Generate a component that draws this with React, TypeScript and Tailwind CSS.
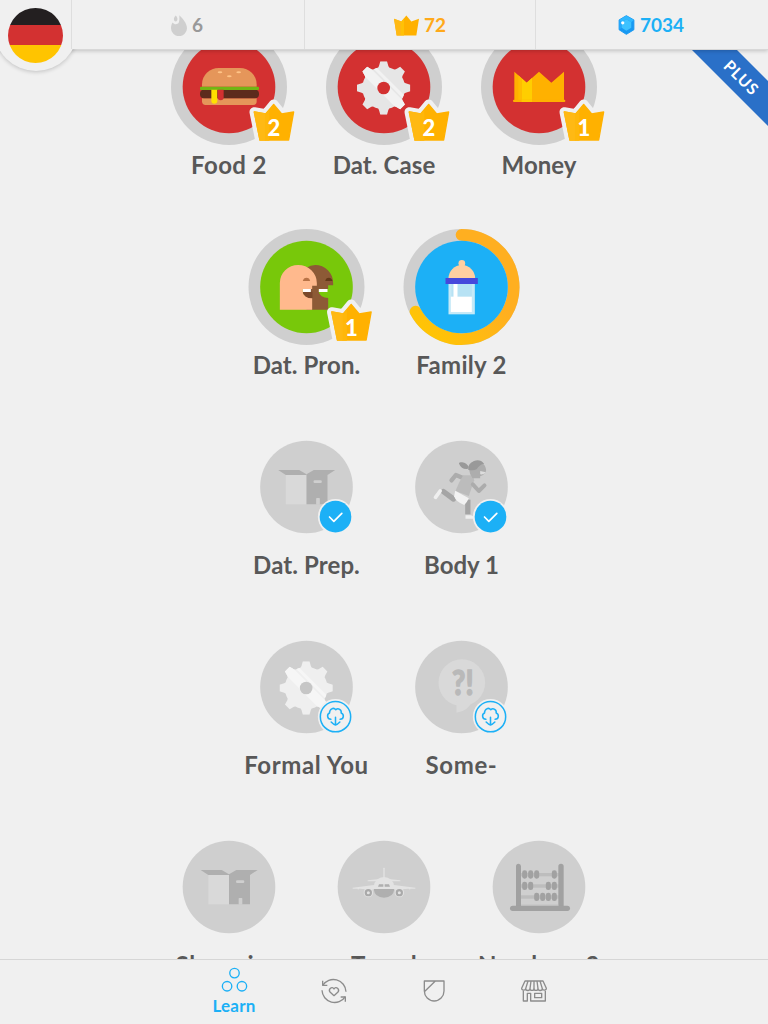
import type { ReactNode } from 'react';

type Badge = { kind: 'crown'; level: number } | { kind: 'check' } | { kind: 'download' };

interface Skill {
  name: string;
  color: string;
  icon: ReactNode;
  ring?: boolean;
  progress?: boolean;
  badge?: Badge;
  labelClass?: string;
}

// Skill artwork is drawn around (0, 0); three units make one pixel.

const GEAR_TEETH = [0, 45, 90, 135, 180, 225, 270, 315];

function Gear({ id, fill, shine, hole }: { id: string; fill: string; shine: string; hole: string }) {
  return (
    <g transform="translate(-1 3)">
      <clipPath id={id}>
        <circle r="64" />
        {GEAR_TEETH.map((a) => (
          <path key={a} d="M-20 -56 L-14 -66 L-10 -80 H10 L14 -66 L20 -56 Z" transform={`rotate(${a})`} />
        ))}
      </clipPath>
      <g clipPath={`url(#${id})`}>
        <rect x="-90" y="-90" width="180" height="180" fill={fill} />
        <path d="M-72 -50 L-46 -66 L80 60 L46 68 Z" fill={shine} />
        <path d="M-36 -64 L-24 -64 L74 34 L68 42 Z" fill={shine} />
      </g>
      <circle r="19" fill={hole} />
    </g>
  );
}

function Burger() {
  return (
    <g>
      <path d="M-81 -1 V-8 A50 49 0 0 1 -31 -57 H33 A50 49 0 0 1 83 -8 V-1 Z" fill="#e5965a" />
      <ellipse cx="-27" cy="-44" rx="7" ry="3" fill="#ffc487" />
      <ellipse cx="29" cy="-44" rx="7" ry="3" fill="#ffc487" />
      <ellipse cx="1" cy="-32" rx="7" ry="3" fill="#ffc487" />
      <path d="M-81 34 H83 V43 A11 11 0 0 1 72 54 H-70 A11 11 0 0 1 -81 43 Z" fill="#e5965a" />
      <rect x="-87" y="8" width="177" height="26" rx="12" fill="#5d2b1d" />
      <rect x="-87" y="-1" width="177" height="10" rx="3" fill="#72b514" />
      <path d="M-53 8 H-35 V41 A9 9 0 0 1 -53 41 Z" fill="#ffe000" />
      <path d="M-34 8 H-16 V31 A9 9 0 0 1 -34 31 Z" fill="#d33131" />
    </g>
  );
}

function MoneyCrown() {
  return (
    <g>
      <path d="M-74 -46 L-37 -13 L0 -46 L37 -13 L75 -46 V44 H-74 Z" fill="#ffb100" />
      <path d="M-52 -26 L-37 -13 L-21 -27 V44 H-52 Z" fill="#ffce00" />
      <path d="M-62 -35 L-52 -26 V44 H-62 Z" fill="#ffbc00" />
      <rect x="-78" y="38" width="157" height="7" rx="3" fill="#ffb100" />
      <rect x="-52" y="38" width="31" height="7" fill="#ffc800" />
    </g>
  );
}

function Faces() {
  return (
    <g>
      <path d="M0 -58 Q12 -66 26 -66 A54 54 0 0 1 80 -12 V-5 H65 V6 H37 V15 A28 19 0 0 0 65 33 V68 H0 Z" fill="#8d5a36" />
      <path d="M-80 68 V-12 A55 54 0 0 1 -25 -66 A56 54 0 0 1 31 -12 V-4 H17 V6 H-11 V15 A28 19 0 0 0 17 33 V68 Z" fill="#ffb98d" />
      <path d="M-11 14 H18 V34 A28 19 0 0 1 -11 14 Z" fill="#7b482a" />
      <rect x="-11" y="6" width="24" height="9" fill="#fff" />
      <rect x="37" y="6" width="26" height="9" fill="#fff" />
      <path d="M-11 -18 Q-9 -28 0 -28 Q9 -28 11 -18 Z" fill="#b97346" />
      <path d="M56 -18 Q58 -28 67 -28 Q76 -27 78 -18 Z" fill="#633818" />
    </g>
  );
}

function Bottle() {
  return (
    <g>
      <circle cx="1" cy="-71" r="10" fill="#ffcfa1" />
      <path d="M-7 -72 H9 V-60 H-7 Z" fill="#ffcfa1" />
      <path d="M-39 -26 A40 40 0 0 1 41 -26 Z" fill="#ffcfa1" />
      <rect x="-39" y="-10" width="79" height="92" fill="#c5e9f7" />
      <rect x="-30" y="-10" width="61" height="84" fill="#b7e2f4" />
      <rect x="-24" y="-10" width="12" height="44" fill="#fff" />
      <rect x="-32" y="29" width="63" height="46" fill="#fff" />
      <rect x="-48" y="-27" width="97" height="18" fill="#4648dc" />
    </g>
  );
}

function Box() {
  return (
    <g>
      <rect x="-62" y="-38" width="62" height="90" fill="#d9d9d9" />
      <path d="M-85 -51 H-22 L0 -38 V-36 H-62 Z" fill="#afafaf" />
      <path d="M0 -38 L22 -51 H86 L63 -36 V52 H0 Z" fill="#afafaf" />
      <rect x="21" y="-20" width="25" height="8" rx="4" fill="#cfcfcf" />
      <rect x="29" y="33" width="11" height="20" rx="2" fill="#cfcfcf" />
    </g>
  );
}

function Runner() {
  return (
    <g fill="none" strokeLinecap="round" strokeLinejoin="round">
      <path d="M-54 14 L-24 36" stroke="#a5a5a5" strokeWidth="16" />
      <path d="M-64 12 L-78 31" stroke="#efefef" strokeWidth="11" />
      <path d="M19 38 V82" stroke="#a5a5a5" strokeWidth="16" strokeLinecap="butt" />
      <path d="M12 85 H28 Q38 88 38 95 H12 Z" fill="#efefef" />
      <path d="M-30 -20 L-17 -36 L12 -24" stroke="#acacac" strokeWidth="13" />
      <path d="M5 -35 H34 L38 -20 L22 27 L-18 12 Q-8 -14 5 -35 Z" fill="#bcbcbc" />
      <path d="M34 -8 L52 12 L69 -5" stroke="#acacac" strokeWidth="12" />
      <path d="M-19 11 L22 34 Q16 48 8 54 Q-18 44 -22 28 Z" fill="#f2f2f2" />
      <path d="M22 -56 Q24 -38 33 -26 H56 V-32 Q72 -38 74 -50 Q72 -66 62 -72 Z" fill="#adadad" />
      <path d="M20 -52 A27 27 0 0 1 68 -70 Q54 -68 46 -54 Q36 -48 20 -52 Z" fill="#999" />
      <path d="M22 -60 Q16 -72 2 -74 Q-10 -76 -7 -69 Q0 -52 18 -54 Z" fill="#999" />
      <path d="M56 -48 L73 -44 Q68 -36 56 -38 Z" fill="#ddd" />
    </g>
  );
}

function Bubble() {
  return (
    <g>
      <circle cx="1" cy="-13" r="70" fill="#d9d9d9" />
      <path d="M-15 44 V77 Q20 72 30 44 Z" fill="#d9d9d9" />
      <text
        transform="translate(4 23) scale(0.86 1)"
        textAnchor="middle"
        fill="#b9b9b9"
        stroke="#b9b9b9"
        strokeWidth="4"
        className="text-[100px] font-black"
      >
        ?!
      </text>
    </g>
  );
}

function Plane() {
  return (
    <g>
      <rect x="-2" y="-58" width="4" height="32" rx="2" fill="#e3e3e3" />
      <path d="M-49 -20 L-20 -23 H20 L49 -20 V-17 H-49 Z" fill="#e3e3e3" />
      <path d="M-30 8 V-3 A30 27 0 0 1 30 -3 V8 Z" fill="#e3e3e3" />
      <path d="M-94 2 L-30 -6 H30 L94 2 V5 H79 L78 8 L74 5 L30 8 H-30 L-74 5 L-78 8 L-79 5 H-94 Z" fill="#e3e3e3" />
      <path d="M-31 6 H31 Q28 32 0 32 Q-28 32 -31 6 Z" fill="#afafaf" />
      <path d="M-18 -1 L-15 -8 H-2 V-1 Z M18 -1 L15 -8 H2 V-1 Z" fill="#afafaf" />
      {[-47, 46].map((x) => (
        <g key={x}>
          <circle cx={x} cy="17" r="14" fill="#e3e3e3" />
          <circle cx={x} cy="17" r="11" fill="#a9a9a9" />
          <circle cx={x} cy="17" r="4.5" fill="#e3e3e3" />
        </g>
      ))}
    </g>
  );
}

const BEADS = [
  { y: -37, xs: [-43, -25, -7, 46] },
  { y: -3, xs: [-43, -25, 28, 46] },
  { y: 30, xs: [-7, 11, 28, 46] },
];

function Abacus() {
  return (
    <g fill="#a1a1a1">
      {BEADS.map((row) => (
        <g key={row.y}>
          <rect x="-60" y={row.y - 5} width="120" height="10" fill="#bdbdbd" />
          {row.xs.map((x) => (
            <rect key={x} x={x - 7.5} y={row.y - 13} width="15" height="25" rx="7" />
          ))}
        </g>
      ))}
      <path d="M-69 60 V-62 A7.5 7.5 0 0 1 -54 -62 V60 Z M58 60 V-62 A8 8 0 0 1 74 -62 V60 Z" />
      <rect x="-87" y="56" width="180" height="16" rx="8" />
      <rect x="-54" y="53" width="112" height="3" fill="#bdbdbd" />
    </g>
  );
}

function SkillBadge({ badge }: { badge: Badge }) {
  if (badge.kind === 'crown') {
    const shape = 'M76 75 L110 81 L134 52 L158 81 L194 75 L179 159 H93 Z';
    return (
      <g strokeLinejoin="round">
        <path d={shape} fill="#f0f0f0" stroke="#f0f0f0" strokeWidth="29" />
        <path d={shape} fill="#ffb100" stroke="#ffb100" strokeWidth="4" />
        <path d="M76 75 L108 81 V159 H93 Z" fill="#ffb914" stroke="#ffb914" strokeWidth="4" />
        <path d="M108 82 L121 68 V161 H108 Z" fill="#ffb70a" />
        <text x="135" y="146" textAnchor="middle" fill="#fff" className="text-[66px] font-black">
          {badge.level}
        </text>
      </g>
    );
  }

  return (
    <g transform="translate(87 89)" fill="none" strokeLinecap="round" strokeLinejoin="round">
      <circle r="53" fill="#f0f0f0" />
      {badge.kind === 'check' ? (
        <>
          <circle r="47.5" fill="#1cb0f6" />
          <path d="M-18 1 L-5 14 L19 -10" stroke="#fff" strokeWidth="5" />
        </>
      ) : (
        <g stroke="#1cb0f6" strokeWidth="4.6">
          <circle r="45.5" />
          <path d="M-14 8 C-25 7 -27 -7 -18 -11 C-18 -23 -6 -29 1 -21 C8 -27 19 -21 17 -11 C27 -7 25 7 14 8" />
          <path d="M0 2 V24 M-13 16 Q-5 24 0 25 Q5 24 13 16" />
        </g>
      )}
    </g>
  );
}

function SkillNode({ skill }: { skill: Skill }) {
  return (
    <div className="flex w-[155px] flex-col items-center">
      <svg viewBox="-174 -174 348 348" className="size-[116px] shrink-0 overflow-visible">
        {skill.ring && <circle r="174" fill="#cfcfcf" />}
        {skill.progress && (
          <>
            <linearGradient id="progress" x1="1" y1="0" x2="0" y2="1">
              <stop offset="0.4" stopColor="#ffaf20" />
              <stop offset="1" stopColor="#ffc800" />
            </linearGradient>
            <path
              d="M0 -156.5 A156.5 156.5 0 1 1 -138 73.8"
              fill="none"
              stroke="url(#progress)"
              strokeWidth="35"
              strokeLinecap="round"
            />
          </>
        )}
        <circle r="139" fill={skill.color} />
        {skill.icon}
        {skill.badge && <SkillBadge badge={skill.badge} />}
      </svg>
      <span
        className={`mt-1 whitespace-nowrap text-2xl leading-8 font-bold text-[#585858] ${skill.labelClass ?? ''}`}
      >
        {skill.name}
      </span>
    </div>
  );
}

const ROWS: Skill[][] = [
  [
    {
      name: 'Food 2',
      color: '#d33131',
      ring: true,
      icon: <Burger />,
      badge: { kind: 'crown', level: 2 },
      labelClass: 'tracking-[0.4px]',
    },
    {
      name: 'Dat. Case',
      color: '#d33131',
      ring: true,
      icon: <Gear id="gear-case" fill="#e6e6e6" shine="#f2f2f2" hole="#d33131" />,
      badge: { kind: 'crown', level: 2 },
      labelClass: 'tracking-[0.1px]',
    },
    { name: 'Money', color: '#d33131', ring: true, icon: <MoneyCrown />, badge: { kind: 'crown', level: 1 } },
  ],
  [
    {
      name: 'Dat. Pron.',
      color: '#78c80a',
      ring: true,
      icon: <Faces />,
      badge: { kind: 'crown', level: 1 },
      labelClass: 'tracking-[0.1px]',
    },
    {
      name: 'Family 2',
      color: '#1cb0f6',
      ring: true,
      progress: true,
      icon: <Bottle />,
      labelClass: 'tracking-[0.3px]',
    },
  ],
  [
    {
      name: 'Dat. Prep.',
      color: '#cfcfcf',
      icon: <Box />,
      badge: { kind: 'check' },
      labelClass: 'tracking-[0.1px]',
    },
    { name: 'Body 1', color: '#cfcfcf', icon: <Runner />, badge: { kind: 'check' } },
  ],
  [
    {
      name: 'Formal You',
      color: '#cfcfcf',
      icon: <Gear id="gear-formal" fill="#efefef" shine="#f6f6f6" hole="#c6c6c6" />,
      badge: { kind: 'download' },
      labelClass: 'tracking-[0.6px]',
    },
    {
      name: 'Some-',
      color: '#cfcfcf',
      icon: <Bubble />,
      badge: { kind: 'download' },
      labelClass: 'tracking-[0.6px]',
    },
  ],
  [
    { name: 'Shopping', color: '#cfcfcf', icon: <Box />, labelClass: 'tracking-[0.9px]' },
    { name: 'Travel', color: '#cfcfcf', icon: <Plane />, labelClass: 'tracking-[0.4px]' },
    { name: 'Numbers 2', color: '#cfcfcf', icon: <Abacus />, labelClass: 'tracking-[0.5px]' },
  ],
];

function Header() {
  return (
    <header className="relative z-10 flex h-[50px] shrink-0 border-b border-[#d8d8d8] bg-[#f0f0f0] pl-[71px] text-[19px] font-bold shadow-[0_1px_4px_rgba(0,0,0,0.2)]">
      {/* Course flag hangs below the bar */}
      <div className="absolute top-0 left-0 h-[84px] w-[84px] overflow-hidden">
        <div className="absolute -top-[13px] -left-[6px] size-[84px] rounded-full bg-[#f0f0f0] shadow-[0_1px_4px_rgba(0,0,0,0.2)]" />
      </div>
      <div className="absolute top-0 left-0 h-[49px] w-[88px] bg-[#f0f0f0]" />
      <div className="absolute top-2 left-2 flex size-[55px] flex-col overflow-hidden rounded-full">
        <div className="h-[17px] bg-[#231f20]" />
        <div className="h-5 bg-[#d33131]" />
        <div className="flex-1 bg-[#ffc400]" />
      </div>

      <div className="relative flex flex-1 items-center justify-center gap-[5px] border-l border-[#dedede] pt-px pr-0.5 text-[#999]">
        <svg viewBox="513 43 48 62" className="h-[21px] w-4" fill="#cfcfcf">
          <path d="M538 43 C547 52 561 66 561 82 A24 24 0 0 1 513 82 C513 75 515 69 518 65 C522 72 532 72 536 66 C539 60 538 50 538 43 Z" />
          <path d="M527 44 C534 50 534 61 527 62 C520 61 520 51 527 44 Z" />
        </svg>
        <span>6</span>
      </div>
      <div className="flex flex-1 items-center justify-center gap-[5px] border-l border-[#dedede] pt-px text-[#ffa91a]">
        <svg viewBox="102 44 75 62" className="h-[21px] w-[25px]">
          <path d="M102 55 L124 63 L139 45 L154 63 L177 55 L169 105 H110 Z" fill="#ffb100" />
          <path d="M102 55 L123 62 V105 H110 Z" fill="#ffb914" />
          <path d="M123 64 L132 54 V105 H123 Z" fill="#ffc107" />
        </svg>
        <span>72</span>
      </div>
      <div className="flex flex-1 items-center justify-center gap-[5px] border-l border-[#dedede] pt-px pr-0.5 text-[#1cb0f6]">
        <svg viewBox="776 44 49 61" className="h-5 w-[17px]">
          <path d="M800 46 L823 59 V89 L800 103 L778 89 V59 Z" fill="#1899f2" stroke="#1899f2" strokeWidth="3" strokeLinejoin="round" />
          <path d="M800 46 L778 59 L786 66 L800 57 L815 66 L823 59 Z" fill="#2fb8ff" />
          <path d="M778 59 L786 66 V83 L778 89 Z" fill="#25a8fb" />
          <path d="M800 57 L815 66 V83 L800 92 L786 83 V66 Z" fill="#3ec2ff" />
          <circle cx="789" cy="68" r="5" fill="#fff" />
        </svg>
        <span>7034</span>
      </div>
    </header>
  );
}

function LearnIcon() {
  return (
    <svg viewBox="-40 -40 80 74" className="h-[25px] w-[27px]" fill="none" stroke="#1cb0f6" strokeWidth="4">
      <circle cx="0" cy="-22" r="14" />
      <circle cx="-22" cy="17" r="14" />
      <circle cx="22" cy="17" r="14" />
    </svg>
  );
}

const TAB_ICONS = [
  {
    id: 'practice',
    body: (
      <>
        <path d="M-34 -17 A38 38 0 0 1 36 2 M34 17 A38 38 0 0 1 -36 -2" />
        <path d="M-34 -31 V-17 H-20 M34 32 V18 H20" />
        <path d="M0 14 L-12 3 C-18 -5 -6 -16 0 -6 C6 -16 18 -5 12 3 Z" />
      </>
    ),
  },
  {
    id: 'leagues',
    body: <path d="M-29 -30 H30 V0 A29.5 30 0 0 1 -29 0 Z M4 -30 L-29 2" />,
  },
  {
    id: 'shop',
    body: (
      <>
        <path d="M-27 -30 H27 L37 -8 A6 5 0 0 1 25 -7 A6 5 0 0 1 12 -7 A6 5 0 0 1 0 -7 A6 5 0 0 1 -12 -7 A6 5 0 0 1 -25 -7 A6 5 0 0 1 -37 -8 Z" />
        <path d="M-18 -30 L-25 -7 M-9 -30 L-12 -7 M0 -30 V-7 M9 -30 L12 -7 M18 -30 L25 -7" />
        <path d="M-32 -1 V30 H-20 V7 H-10 V30 H34 V-1 M2 7 H23 V20 H2 Z" />
      </>
    ),
  },
];

function TabBar() {
  return (
    <nav className="relative z-10 flex h-[65px] shrink-0 justify-center border-t border-[#d6d6d6] bg-[#f0f0f0]">
      <div className="flex w-[100px] flex-col items-center pt-[7px]">
        <LearnIcon />
        <span className="mt-[2px] text-[17px] leading-6 font-bold tracking-[0.2px] text-[#1cb0f6]">Learn</span>
      </div>
      {TAB_ICONS.map((tab) => (
        <div key={tab.id} className="flex w-[100px] justify-center pt-[17px]">
          <svg
            viewBox="-42 -42 84 84"
            className="size-7"
            fill="none"
            stroke="#8c8c8c"
            strokeWidth="4"
            strokeLinejoin="round"
          >
            {tab.body}
          </svg>
        </div>
      ))}
    </nav>
  );
}

export default function App() {
  return (
    <div className="relative flex h-screen flex-col overflow-hidden bg-[#f0f0f0] font-['Lato','Open_Sans',sans-serif]">
      <Header />

      <main className="relative min-h-0 flex-1 overflow-hidden">
        <div className="-mt-[21px] flex flex-col">
          {ROWS.map((row, i) => (
            <div
              key={i}
              className={`flex h-[200px] shrink-0 justify-center ${row.length === 2 ? 'translate-x-[0.5px] pr-px' : ''}`}
            >
              {row.map((skill) => (
                <SkillNode key={skill.name} skill={skill} />
              ))}
            </div>
          ))}
        </div>

        {/* PLUS corner ribbon */}
        <svg viewBox="0 0 76 76" className="absolute top-0 right-0 size-[76px]">
          <path d="M0 0 H45 L76 31 V76 Z" fill="#2a70c8" />
          <text x="0" y="6" transform="translate(49.5 27.5) rotate(45)" textAnchor="middle" fill="#fff" className="text-[16px] font-bold tracking-[0.8px]">
            PLUS
          </text>
        </svg>
      </main>

      <TabBar />
    </div>
  );
}
